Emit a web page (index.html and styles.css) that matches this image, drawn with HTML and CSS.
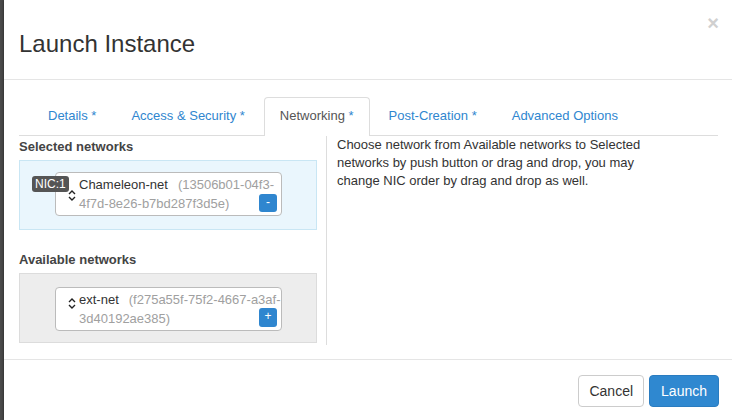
FILE: index.html
```html
<!DOCTYPE html>
<html>
<head>
<meta charset="utf-8">
<link rel="stylesheet" href="styles.css">
</head>
<body>
<div class="page">
  <div class="backdrop"></div>
  <div class="modal">
    <div class="modal-header">
      <h4 class="title">Launch Instance</h4>
      <span class="close">&times;</span>
    </div>
    <ul class="tabs">
      <li class="tab">Details <span class="star">*</span></li>
      <li class="tab">Access &amp; Security <span class="star">*</span></li>
      <li class="tab active">Networking <span class="star">*</span></li>
      <li class="tab">Post-Creation <span class="star">*</span></li>
      <li class="tab">Advanced Options</li>
    </ul>
    <div class="content">
      <div class="left">
        <div class="label">Selected networks</div>
        <div class="box selected">
          <div class="card">
            <span class="badge">NIC:1</span>
            <svg class="sort sort-sel" width="8" height="11" viewBox="0 0 8 11"><path d="M1 4 L4 1 L7 4 M1 7 L4 10 L7 7" fill="none" stroke="#222" stroke-width="1.4"/></svg>
            <div class="net"><span class="name">Chameleon-net</span><span class="id">(13506b01-04f3-</span><br><span class="id2">4f7d-8e26-b7bd287f3d5e)</span></div>
            <span class="btn-sm btn-sel">-</span>
          </div>
        </div>
        <div class="label label-avail">Available networks</div>
        <div class="box available">
          <div class="card">
            <svg class="sort sort-av" width="8" height="11" viewBox="0 0 8 11"><path d="M1 4 L4 1 L7 4 M1 7 L4 10 L7 7" fill="none" stroke="#222" stroke-width="1.4"/></svg>
            <div class="net"><span class="name">ext-net</span><span class="id">(f275a55f-75f2-4667-a3af-</span><br><span class="id2">3d40192ae385)</span></div>
            <span class="btn-sm btn-av">+</span>
          </div>
        </div>
      </div>
      <div class="right">
        <p class="help">Choose network from Available networks to Selected networks by push button or drag and drop, you may change NIC order by drag and drop as well.</p>
      </div>
    </div>
    <div class="footer">
      <button class="btn btn-default">Cancel</button>
      <button class="btn btn-primary">Launch</button>
    </div>
  </div>
</div>
</body>
</html>
```

FILE: styles.css
```css
html, body {
  margin: 0;
  padding: 0;
  background: #ffffff;
}
body {
  font-family: "Liberation Sans", Arial, sans-serif;
  color: #333333;
  width: 732px;
  height: 420px;
  overflow: hidden;
}
.page {
  display: flex;
  height: 420px;
}
.backdrop {
  width: 4px;
  flex: none;
  background: #4a4a4a;
}
.modal {
  flex: 1;
  position: relative;
  background: #fff;
  box-shadow: -1px 0 2px rgba(0,0,0,0.3);
}
.modal-header {
  height: 79px;
  border-bottom: 1px solid #e5e5e5;
  box-sizing: content-box;
  padding: 0 15px;
}
.title {
  margin: 0;
  padding-top: 31px;
  font-size: 24px;
  line-height: 26px;
  font-weight: normal;
  color: #333;
}
.close {
  position: absolute;
  top: 10px;
  right: 13px;
  font-size: 20px;
  font-weight: bold;
  color: #d0d0d0;
  line-height: 26px;
}
.tabs {
  list-style: none;
  margin: 17px 14px 0 15px;
  padding: 0 0 0 13px;
  display: flex;
  border-bottom: 1px solid #dddddd;
}
.tab {
  font-size: 13px;
  line-height: 18px;
  padding: 9px 15px 10px;
  border: 1px solid transparent;
  border-bottom: none;
  margin-right: 3px;
  margin-bottom: -1px;
  color: #2f86cf;
  border-radius: 4px 4px 0 0;
}
.tab.active {
  color: #555555;
  background: #fff;
  border-color: #dddddd;
  padding-bottom: 11px;
}
.star {
  color: #2f86cf;
}
.content {
  display: flex;
  margin: 0 15px;
}
.left {
  width: 298px;
  padding: 2px 9px 2px 0;
}
.label {
  font-size: 13px;
  line-height: 18px;
  font-weight: bold;
  color: #444;
  margin-bottom: 4px;
}
.label-avail {
  margin-top: 21px;
}
.box {
  border: 1px solid #c9e6f4;
  background: #eaf6fd;
  padding: 11px 0 13px 35px;
}
.box.available {
  background: #ededed;
  border-color: #dcdcdc;
  padding: 13px 0 11px 35px;
}
.card {
  position: relative;
  width: 202px;
  background: #fff;
  border: 1px solid #bbbbbb;
  border-radius: 4px;
  padding: 2px 0 2px 23px;
}
.net {
  font-size: 13px;
  line-height: 19px;
  white-space: nowrap;
}
.name {
  color: #333;
  margin-right: 10px;
}
.id, .id2 {
  color: #a0a0a0;
}
.badge {
  position: absolute;
  left: -24px;
  top: 3px;
  background: #555555;
  color: #fff;
  font-size: 12px;
  line-height: 16px;
  padding: 0 3px;
  border-radius: 3px;
}
.sort {
  position: absolute;
  left: 12px;
}
.sort-sel { top: 17px; }
.sort-av { top: 10px; }
.btn-sm {
  position: absolute;
  right: 4px;
  width: 18px;
  height: 18px;
  border-radius: 3px;
  background: #2f86cf;
  color: #fff;
  font-size: 12px;
  line-height: 17px;
  text-align: center;
}
.btn-sel { bottom: 3px; }
.btn-av { bottom: 3px; height: 19px; }
.right {
  flex: 1;
  border-left: 1px solid #dddddd;
  padding-left: 10px;
}
.help {
  margin: 0;
  max-width: 330px;
  font-size: 13px;
  line-height: 18px;
  color: #333;
}
.footer {
  margin-top: 14px;
  border-top: 1px solid #e5e5e5;
  padding: 15px 13px 0 0;
  display: flex;
  justify-content: flex-end;
  gap: 5px;
}
.btn {
  font-family: "Liberation Sans", Arial, sans-serif;
  font-size: 14px;
  line-height: 18px;
  padding: 6px 10px;
  border-radius: 4px;
  border: 1px solid #cccccc;
  background: #fff;
  color: #333;
  margin: 0;
}
.btn-primary {
  background: #2f88d0;
  border-color: #2a7cc0;
  color: #fff;
  padding: 6px 11px;
}
```
